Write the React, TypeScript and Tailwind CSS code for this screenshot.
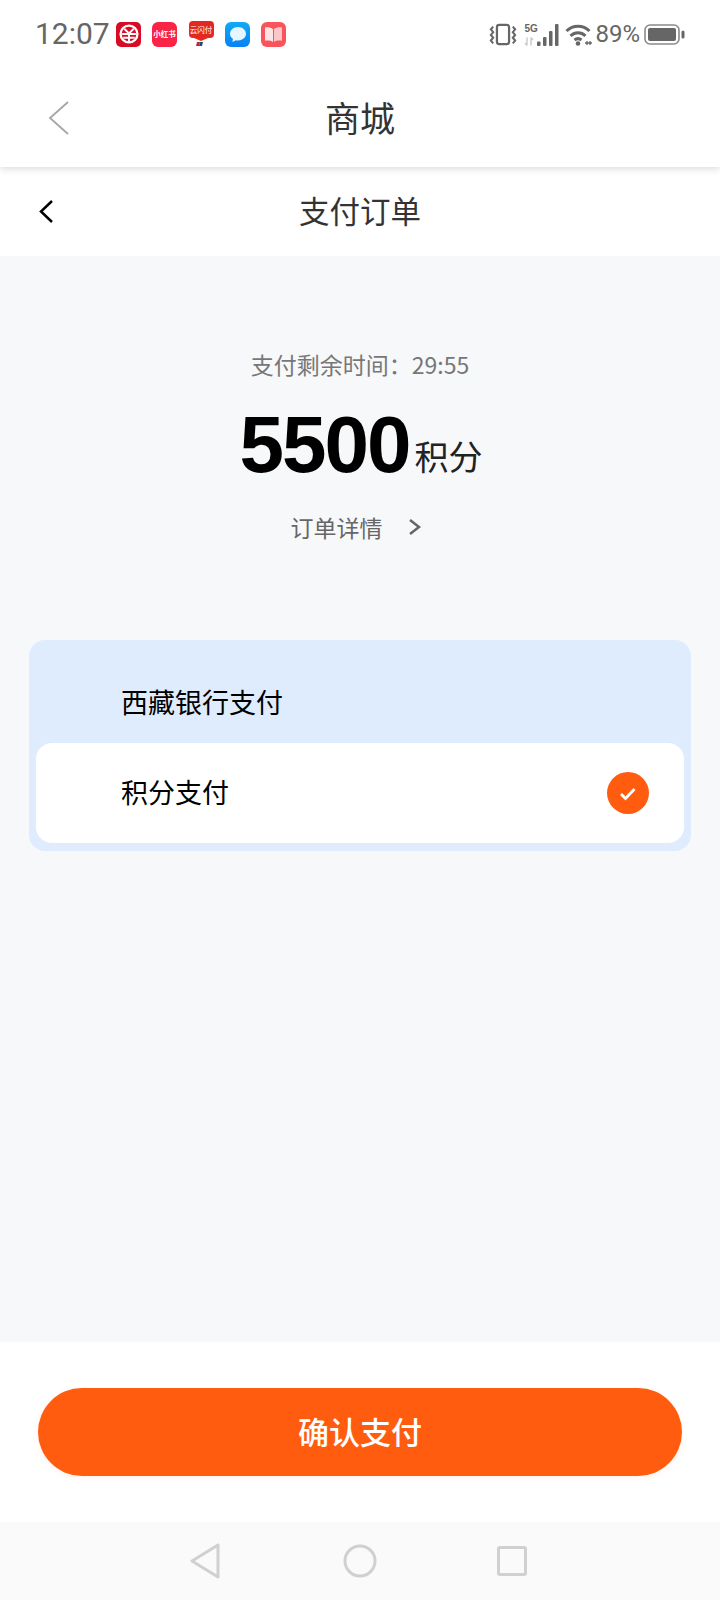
const cjk = { fontFamily: '"Noto Sans CJK SC", "Noto Sans", sans-serif' };

const UnionPayIcon = () => (
  <div className="w-[25px] h-[25px] rounded-[5px] bg-[#d90a24] flex items-center justify-center">
    <svg width="20" height="20" viewBox="0 0 19 19" fill="none" stroke="#fff" strokeWidth="2.200">
      <circle cx="9.500" cy="9.500" r="8" />
      <path d="M5 4.500 9.500 9l4.500-4.500M3 9.500h13M4 13h11M9.500 9v9" strokeWidth="1.800" />
    </svg>
  </div>
);

const RedBookIcon = () => (
  <div className="w-[25px] h-[25px] rounded-[6px] bg-[#fb2346] flex items-center justify-center overflow-hidden">
    <span className="text-[7.500px] leading-none font-bold text-white whitespace-nowrap" style={cjk}>
      小红书
    </span>
  </div>
);

const YunPayIcon = () => (
  <div className="w-[26px] h-[26px] flex flex-col items-center">
    <div className="w-[25px] h-[17px] rounded-[4px] bg-[#e5281f] flex items-center justify-center overflow-hidden">
      <span className="text-[7.500px] leading-none text-white whitespace-nowrap" style={cjk}>
        云闪付
      </span>
    </div>
    <svg width="26" height="9" viewBox="0 0 26 9">
      <path d="M6 0h14l-7 3z" fill="#e5281f" />
      <path d="M9 4h3l-1 4H8z" fill="#c9242c" />
      <path d="M12 4h3l-1 4h-3z" fill="#1d4c78" />
    </svg>
  </div>
);

const MessageIcon = () => (
  <div className="w-[25px] h-[25px] rounded-[6px] bg-gradient-to-b from-[#12aaf6] to-[#0a82f4] flex items-center justify-center">
    <svg width="18" height="17" viewBox="0 0 18 17">
      <path d="M9 1c4.400 0 8 2.900 8 6.800s-3.600 6.700-8 6.700c-.8 0-1.500-.1-2.200-.3L3.500 16l.4-3.200C2 11.600 1 9.800 1 7.800 1 3.900 4.600 1 9 1z" fill="#e5f6fe" />
    </svg>
  </div>
);

const BookIcon = () => (
  <div className="w-[25px] h-[25px] rounded-[6px] bg-[#f9545c] flex items-center justify-center">
    <svg width="19" height="17" viewBox="0 0 19 17">
      <path d="M1 1.500c3-.5 6 0 8 1.500v13c-2-1.200-5-1.700-8-1.200z" fill="#fde3e3" />
      <path d="M18 1.500c-3-.5-6 0-8 1.500v13c2-1.200 5-1.700 8-1.200z" fill="#fcc6c8" />
    </svg>
  </div>
);

const VibrateIcon = () => (
  <svg width="28" height="23" viewBox="0 0 30 23" fill="none" stroke="#666" strokeWidth="2.400">
    <rect x="8.500" y="1.200" width="13" height="20.600" rx="2.500" />
    <path d="M4.500 3 2 6l2.500 3L2 12l2.500 3L2 18l2.500 3" strokeWidth="2.200" />
    <path d="M25.500 3 28 6l-2.500 3L28 12l-2.500 3L28 18l-2.500 3" strokeWidth="2.200" />
  </svg>
);

const SignalIcon = () => (
  <div className="relative w-[36px] h-[23px]">
    <span className="absolute left-0 top-0 text-[10px] leading-[11px] font-bold text-[#666]" style={{ fontFamily: '"Liberation Sans", sans-serif' }}>
      5G
    </span>
    <svg className="absolute left-0 top-0" width="36" height="23" viewBox="0 0 36 23">
      <path d="M3 14.500v8M1 20l2 2.500M7 14.500v8M9 17l-2-2.500" stroke="#cfcfcf" strokeWidth="1.600" fill="none" />
      <rect x="13" y="18.500" width="3.500" height="4.500" rx="1" fill="#666" />
      <rect x="19" y="14" width="3.500" height="9" rx="1" fill="#666" />
      <rect x="25" y="8" width="3.500" height="15" rx="1" fill="#666" />
      <rect x="31" y="1" width="3.500" height="22" rx="1" fill="#666" />
    </svg>
  </div>
);

const WifiIcon = () => (
  <svg width="28" height="23" viewBox="0 0 28 23" fill="none" stroke="#666" strokeWidth="3">
    <path d="M1.500 8C8 1.500 18 1.500 24.500 8" />
    <path d="M5.500 12.800c4.500-4 10.500-4 15 0" />
    <path d="M9.500 17c2-1.600 5-1.600 7 0" />
    <circle cx="13" cy="20.500" r="2.300" fill="#666" stroke="none" />
    <path d="M20 20h7M22 18v4M25 18v4" strokeWidth="1.300" />
  </svg>
);

const BatteryIcon = () => (
  <svg width="41" height="21" viewBox="0 0 41 21">
    <rect x="1" y="1" width="34" height="19" rx="5" fill="none" stroke="#8a8a8a" strokeWidth="1.600" />
    <rect x="4" y="4" width="28" height="13" rx="2" fill="#666" />
    <rect x="37.500" y="6.500" width="3" height="8" rx="1.500" fill="#666" />
  </svg>
);

export default function App() {
  return (
    <div className="w-[720px] h-[1600px] flex flex-col bg-[#f7f8fa]" style={cjk}>
      <div className="relative z-20 h-[67px] bg-white flex items-center justify-between pl-[35px] pr-[35px] pt-[1px] shrink-0">
        <div className="flex items-center">
          <span className="text-[30px] leading-none text-[#666] w-[81px]" style={{ fontFamily: 'Roboto, sans-serif' }}>
            12:07
          </span>
          <div className="flex items-center gap-[11px]">
            <UnionPayIcon />
            <RedBookIcon />
            <YunPayIcon />
            <MessageIcon />
            <BookIcon />
          </div>
        </div>
        <div className="flex items-center">
          <VibrateIcon />
          <div className="ml-[7px]"><SignalIcon /></div>
          <div className="ml-[5px]"><WifiIcon /></div>
          <span className="ml-[2px] text-[24px] leading-none text-[#666]" style={{ fontFamily: 'Roboto, sans-serif' }}>
            89%
          </span>
          <div className="ml-[4px]"><BatteryIcon /></div>
        </div>
      </div>

      <div className="relative z-10 h-[100px] bg-white flex items-center justify-center pb-[2px] shrink-0 shadow-[0_2px_7px_rgba(0,0,0,0.14)]">
        <svg className="absolute left-[48px] top-[34px]" width="22" height="34" viewBox="0 0 22 34" fill="none" stroke="#a6a6a6" strokeWidth="1.800">
          <path d="M20 1 2 17l18 16" />
        </svg>
        <span className="text-[35px] leading-none text-[#333]">商城</span>
      </div>

      <div className="relative h-[89px] bg-white flex items-center justify-center pb-[2px] shrink-0">
        <svg className="absolute left-[38px] top-[32px]" width="16" height="25" viewBox="0 0 16 25" fill="none" stroke="#000" strokeWidth="2.500">
          <path d="M14 2 3 12.500 14 23" />
        </svg>
        <span className="text-[30.500px] leading-none text-[#333]">支付订单</span>
      </div>

      <div className="flex-1 flex flex-col items-center">
        <p className="mt-[92px] text-[23px] leading-[32px] text-[#777]">支付剩余时间：29:55</p>
        <div className="mt-[23px] ml-[2px] flex items-end h-[84px]">
          <span className="text-[80px] leading-[84px] font-bold text-black tracking-[-2px]" style={{ fontFamily: '"Liberation Sans", sans-serif' }}>
            5500
          </span>
          <span className="ml-[5px] mb-[9px] text-[34px] leading-[44px] text-[#222]">积分</span>
        </div>
        <div className="mt-[23px] mr-[8px] flex items-center h-[34px]">
          <span className="text-[23px] leading-none text-[#666]">订单详情</span>
          <svg className="ml-[25px]" width="14" height="18" viewBox="0 0 14 18" fill="none" stroke="#666" strokeWidth="2.500">
            <path d="M2 2l9 7-9 7" />
          </svg>
        </div>

        <div className="mt-[96px] w-[662px] h-[211px] rounded-[16px] bg-[#dfecfe] flex flex-col justify-end p-[7px] pb-[8px]">
          <div className="h-[96px] flex items-center pl-[85px] pt-[12px]">
            <span className="text-[27px] leading-none text-black">西藏银行支付</span>
          </div>
          <div className="h-[100px] rounded-[16px] bg-white flex items-center justify-between pl-[85px] pr-[35px]">
            <span className="text-[27px] leading-none text-black pb-[4px]">积分支付</span>
            <div className="w-[42px] h-[42px] rounded-full bg-[#ff5c0f] flex items-center justify-center">
              <svg width="20" height="17" viewBox="0 0 20 17" fill="none" stroke="#fff" strokeWidth="2.800">
                <path d="M3 9l4.500 4.500L16.500 4" />
              </svg>
            </div>
          </div>
        </div>
      </div>

      <div className="h-[180px] bg-white flex items-center justify-center shrink-0">
        <button className="w-[644px] h-[88px] rounded-[44px] bg-[#ff5c0f] text-white text-[31px] leading-none font-medium pb-[3px] shadow-[0_2px_6px_rgba(255,92,15,0.08)]">
          确认支付
        </button>
      </div>

      <div className="h-[78px] bg-[#fafafa] flex items-center shrink-0 pl-[190px]">
        <svg width="30" height="36" viewBox="0 0 30 36" fill="none" stroke="#d0d0d0" strokeWidth="3" strokeLinejoin="round">
          <path d="M28 2v32L2 18z" />
        </svg>
        <svg className="ml-[123px]" width="34" height="34" viewBox="0 0 34 34" fill="none" stroke="#d0d0d0" strokeWidth="3">
          <circle cx="17" cy="17" r="15" />
        </svg>
        <svg className="ml-[120px]" width="30" height="30" viewBox="0 0 30 30" fill="none" stroke="#d0d0d0" strokeWidth="3" strokeLinejoin="round">
          <rect x="1.500" y="1.500" width="27" height="27" rx="1.500" />
        </svg>
      </div>
    </div>
  );
}
